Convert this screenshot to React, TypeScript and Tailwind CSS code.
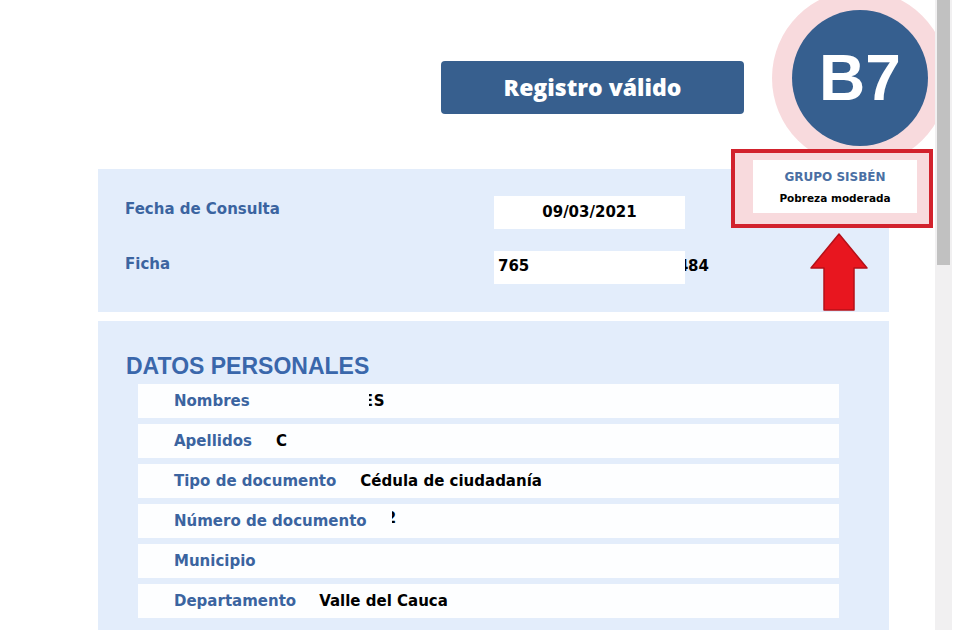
import React from "react";

const dv = "font-['DejaVu_Sans',sans-serif]";

type Row = { label: string; value?: React.ReactNode };

const rows: Row[] = [
  {
    label: "Nombres",
    value: (
      <span className="ml-[96px] inline-flex">
        <span className="inline-block w-[5px] overflow-hidden">
          <span className="inline-block -ml-[6px]">E</span>
        </span>
        <span>S</span>
      </span>
    ),
  },
  { label: "Apellidos", value: <span className="ml-px">C</span> },
  { label: "Tipo de documento", value: <span className="ml-px">Cédula de ciudadanía</span> },
  {
    label: "Número de documento",
    value: (
      <span className="ml-[2px] inline-block w-[4px] overflow-hidden">
        <span className="inline-block -ml-[6px]">2</span>
      </span>
    ),
  },
  { label: "Municipio" },
  { label: "Departamento", value: "Valle del Cauca" },
];

export default function App() {
  return (
    <div className={`flex h-[630px] w-[969px] overflow-hidden bg-white ${dv}`}>
      <div className="relative h-full w-[935px] overflow-hidden">
        {/* header */}
        <div className="h-[169px] pl-[441px] pt-[61px]">
          <div className="flex h-[53px] w-[303px] items-center justify-center rounded-[4px] bg-[#375f8e]">
            <span className="font-['Open_Sans',sans-serif] text-[23px] font-extrabold leading-none text-white">
              Registro válido
            </span>
          </div>
        </div>

        {/* top panel */}
        <div className="ml-[98px] flex w-[791px] flex-col gap-[22px] bg-[#e3edfb] pb-[28px] pl-[27px] pt-[27px]">
          <div className="flex h-[33px] items-start">
            <div className="w-[369px] pt-[4px] text-[15px] font-bold leading-[18px] text-[#3b64a0]">
              Fecha de Consulta
            </div>
            <div className="flex h-[33px] w-[191px] items-center justify-center bg-white text-[15px] font-bold text-black">
              09/03/2021
            </div>
          </div>
          <div className="flex h-[33px] items-start">
            <div className="w-[369px] pt-[4px] text-[15px] font-bold leading-[18px] text-[#3b64a0]">
              Ficha
            </div>
            <div className="flex h-[33px] w-[191px] items-center bg-white pb-[3px] pl-[4px] text-[15px] font-bold text-black">
              765
            </div>
            <div className="flex h-[33px] items-center pb-[3px] text-[15px] font-bold text-black">
              <span className="inline-block w-[3px] overflow-hidden">
                <span className="inline-block -ml-[7px]">4</span>
              </span>
              <span>84</span>
            </div>
          </div>
        </div>

        {/* bottom panel */}
        <div className="ml-[98px] mt-[9px] w-[791px] bg-[#e3edfb] pb-[20px] pt-[31px]">
          <h2 className="pl-[28px] font-['Liberation_Sans',sans-serif] text-[23px] font-bold leading-[28px] text-[#3a67ab]">
            DATOS PERSONALES
          </h2>
          <div className="ml-[40px] mt-[4px] flex w-[701px] flex-col gap-[6px]">
            {rows.map((r) => (
              <div
                key={r.label}
                className="flex h-[34px] items-center gap-[23px] bg-[#fdfeff] pl-[36px] text-[15px] font-bold"
              >
                <span className="text-[#3b64a0]">{r.label}</span>
                {r.value !== undefined && <span className="text-black">{r.value}</span>}
              </div>
            ))}
          </div>
        </div>

        {/* badge + annotation overlay */}
        <div className="absolute left-[772px] top-[-10px] h-[176px] w-[176px] rounded-full bg-[#f8dadd]" />
        <div className="absolute left-[792px] top-[10px] flex h-[136px] w-[136px] items-center justify-center rounded-full bg-[#365f8f]">
          <span className="font-['Liberation_Sans',sans-serif] text-[64px] font-bold leading-none text-white">
            B7
          </span>
        </div>
        <div className="absolute left-[731px] top-[149px] h-[79px] w-[202px] border-[4px] border-[#d2222d] bg-[#f8dadd] pl-[18px] pt-[7px]">
          <div className="flex h-[53px] w-[164px] flex-col items-center bg-white pt-[10px]">
            <span className="text-[12px] font-bold leading-[14px] text-[#4a6fa3]">GRUPO SISBÉN</span>
            <span className="mt-[8px] text-[10.5px] font-bold leading-[12px] text-black">
              Pobreza moderada
            </span>
          </div>
        </div>
        <svg
          className="absolute left-[808px] top-[232px]"
          width="62"
          height="80"
          viewBox="0 0 62 80"
        >
          <path
            d="M31 2 L59 36 L46 36 L46 78 L16 78 L16 36 L3 36 Z"
            fill="#e8161f"
            stroke="#b51119"
            strokeWidth="1.5"
            strokeLinejoin="round"
          />
        </svg>
      </div>

      {/* scrollbar */}
      <div className="h-full w-[17px] bg-[#f1f0f1]">
        <div className="ml-[2px] h-[265px] w-[13px] bg-[#c1c1c1]" />
      </div>
      <div className="h-full flex-1 bg-white" />
    </div>
  );
}
